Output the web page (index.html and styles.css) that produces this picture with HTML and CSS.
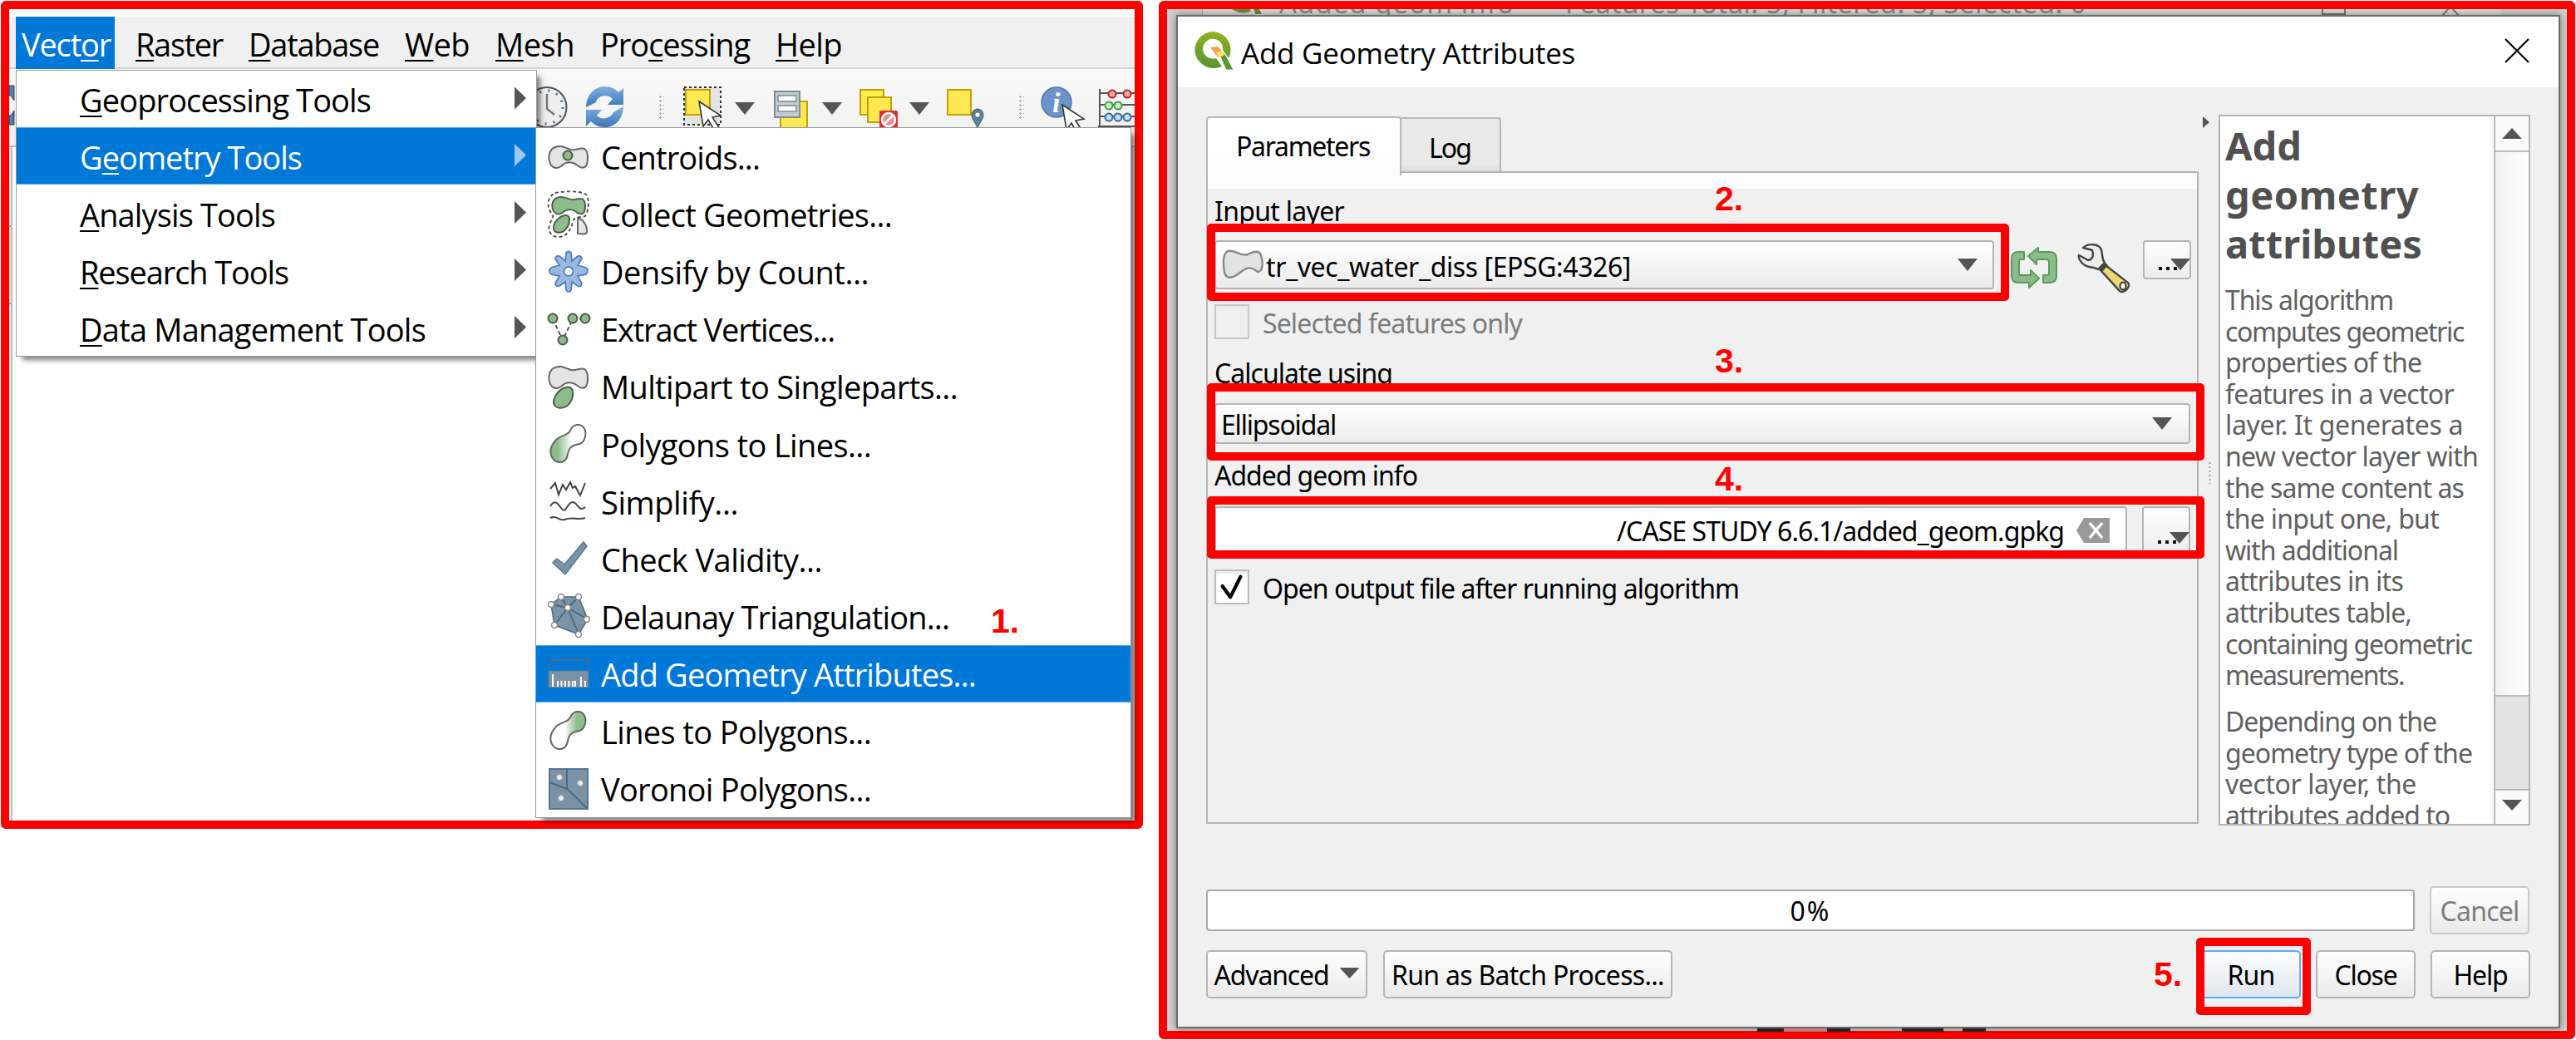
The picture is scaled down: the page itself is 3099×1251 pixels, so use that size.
FILE: index.html
```html
<!DOCTYPE html>
<html lang="en">
<head>
<meta charset="utf-8">
<title>Add Geometry Attributes</title>
<link rel="stylesheet" href="styles.css">
</head>
<body>
<svg class="defs" width="0" height="0">
  <defs>
    <linearGradient id="fadeR"><stop offset=".2" stop-color="#8cbc8c"/><stop offset=".6" stop-color="#fff"/></linearGradient>
    <linearGradient id="fadeL"><stop offset=".4" stop-color="#fff"/><stop offset=".75" stop-color="#8cbc8c"/></linearGradient>
    <linearGradient id="qg" x2="0" y2="1"><stop offset="0" stop-color="#93b023"/><stop offset="1" stop-color="#589632"/></linearGradient>
    <linearGradient id="blue" x2="0" y2="1"><stop offset="0" stop-color="#7fb0e0"/><stop offset="1" stop-color="#3a76b8"/></linearGradient>
    <path id="blob" d="M8 2C15-1 20 3 27 5C34 6 38 2 43 4C48 7 48 19 45 25C40 29 36 25 32 22C26 19 20 20 15 25C9 29 3 27 1 19C-1 11 2 4 8 2Z"/>
    <path id="bean" d="M34 2C41 1 46 8 44 16C42 24 39 25 33 26C24 28 24 34 22 41C18 50 8 48 4 41C0 33 4 25 10 19C16 14 23 15 26 9C28 5 29 3 34 2Z"/>
    <path id="cursor" d="M0 0L26 17L16 19L25 33L19 36L11 22L5 30Z" fill="#fff" stroke="#333" stroke-width="1.6"/>
    <symbol id="qlogo" viewBox="0 0 47 46"><path d="M23 0a23 22 0 1 0 10 42l-7-10a12 12 0 1 1 8-10l7 10A23 22 0 0 0 23 0Z" fill="url(#qg)"/><path d="M29 26l8 1 10 19H38Z" fill="#589632" stroke="#fff" stroke-width="1"/><path d="M19 19l9-1 8 9-8 4Z" fill="#f3a047"/><path d="M26 25l7-2 3 5-7 4Z" fill="#f4e36a"/></symbol>
  </defs>
</svg>

<main class="page">
  <section class="frame app">
    <nav class="menubar">
      <span class="mb mb-on"><span data-w="107">Vect<u>o</u>r</span></span>
      <span class="mb"><span data-w="105"><u>R</u>aster</span></span>
      <span class="mb"><span data-w="157"><u>D</u>atabase</span></span>
      <span class="mb"><span data-w="78"><u>W</u>eb</span></span>
      <span class="mb"><span data-w="95"><u>M</u>esh</span></span>
      <span class="mb"><span data-w="180">Pro<u>c</u>essing</span></span>
      <span class="mb"><span data-w="80"><u>H</u>elp</span></span>
    </nav>
    <div class="toolbar">
      <svg class="t-clock" viewBox="0 0 50 52"><ellipse cx="25" cy="26" rx="23.5" ry="24" fill="#eeeeec" stroke="#555" stroke-width="2"/><ellipse cx="25" cy="26" rx="19" ry="20" fill="none" stroke="#3a6ea5" stroke-width="3" stroke-dasharray="2 8.3"/><path d="M25 10v18l9 7" fill="none" stroke="#777" stroke-width="2.4"/></svg>
      <svg class="t-refresh" viewBox="0 0 48 52"><path d="M1 26C2 8 14 1 23 1C32 1 36 4 40 8L46 3V23H27L33 16C26 9 14 13 13 20L1 26Z" fill="url(#blue)"/><path d="M46 25C45 43 34 50 24 50C15 50 11 47 7 43L1 49V29H20L14 36C21 43 32 38 34 32Z" fill="url(#blue)"/></svg>
      <span class="grip g1"></span>
      <svg class="t-select" viewBox="0 0 50 52"><rect x="2" y="2" width="44" height="45" fill="#e4e4e4" stroke="#333" stroke-width="2" stroke-dasharray="3 3"/><rect x="4" y="5" width="29" height="30" fill="#fce94f" stroke="#c4a000" stroke-width="2"/><use href="#cursor" x="20" y="19"/></svg>
      <i class="down d1"></i>
      <svg class="t-form" viewBox="0 0 44 52"><rect x="9" y="19" width="32" height="32" fill="#fce94f" stroke="#c4a000" stroke-width="2"/><rect x="2" y="7" width="30" height="31" fill="#c3ccd3" stroke="#7d8b96" stroke-width="2"/><path d="M6 12h22v7H6zM6 24h22v7H6z" fill="#fff" stroke="#7d8b96" stroke-width="1.5"/></svg>
      <i class="down d2"></i>
      <svg class="t-desel" viewBox="0 0 48 52"><rect x="2" y="5" width="28" height="30" fill="#fce94f" stroke="#c4a000" stroke-width="2"/><rect x="11" y="14" width="28" height="30" fill="#fce94f" stroke="#c4a000" stroke-width="2"/><rect x="25" y="30" width="22" height="22" rx="2" fill="#d9313a"/><circle cx="36" cy="41" r="8" fill="#e88" stroke="#fff" stroke-width="2.5"/><path d="M30 47L42 35" stroke="#fff" stroke-width="3"/></svg>
      <i class="down d3"></i>
      <svg class="t-pin" viewBox="0 0 46 52"><rect x="2" y="5" width="28" height="30" fill="#fce94f" stroke="#c4a000" stroke-width="2"/><path d="M38 51C35 44 31 40 31 35A7 7 0 0 1 45 35C45 40 41 44 38 51Z" fill="#5d8096" stroke="#43606f"/><circle cx="38" cy="35" r="2.6" fill="#fff"/></svg>
      <span class="grip g2"></span>
      <svg class="t-info" viewBox="0 0 50 52"><circle cx="19" cy="20" r="18" fill="#6b95c8" stroke="#4a78b0" stroke-width="1.5"/><text x="14" y="32" class="info-i">i</text><use href="#cursor" x="26" y="23"/></svg>
      <svg class="t-abacus" viewBox="0 0 44 52"><path d="M2 4V50M0 49H44M2 9H44M2 23H44M2 37H44" stroke="#555" stroke-width="2" fill="none"/><g stroke-width="2"><g fill="#f5a9a9" stroke="#b22"><circle cx="17" cy="10" r="4.5"/><circle cx="35" cy="10" r="4.5"/></g><g fill="#bff0bf" stroke="#4a9a4a"><circle cx="13" cy="24" r="4.5"/><circle cx="24" cy="24" r="4.5"/></g><g fill="#bfe0f8" stroke="#37699c"><circle cx="13" cy="38" r="4.5"/><circle cx="24" cy="38" r="4.5"/><circle cx="35" cy="38" r="4.5"/></g></g></svg>
    </div>
    <div class="canvas">
      <div class="rail"><i class="rail-a"></i><i class="rail-b"></i></div>
      <div class="edge"></div>
    </div>
    <svg class="magnifier" viewBox="0 0 6 47"><path d="M0 0H6V18L2 12H0ZM0 47H6V30L2 36H0Z" fill="#4f7fb5" stroke="#345"/></svg>

    <ul class="dropdown">
      <li><span data-w="350"><u>G</u>eoprocessing Tools</span><i></i></li>
      <li class="on"><span data-w="267">G<u>e</u>ometry Tools</span><i></i></li>
      <li><span data-w="235"><u>A</u>nalysis Tools</span><i></i></li>
      <li><span data-w="251"><u>R</u>esearch Tools</span><i></i></li>
      <li><span data-w="416"><u>D</u>ata Management Tools</span><i></i></li>
    </ul>

    <ul class="submenu">
      <li><svg viewBox="0 0 48 50"><use href="#blob" y="11" fill="#e4e4e4" stroke="#666" stroke-width="2"/><circle cx="23" cy="23" r="5.5" fill="#8cbc8c" stroke="#4a5a4a" stroke-width="2"/></svg><span data-w="191">Centroids...</span></li>
      <li><svg viewBox="0 0 48 50"><path d="M8-1C18-3 38-4 45 1C50 8 48 20 44 27C36 29 32 27 29 33C28 42 22 52 12 52C2 52-1 44 1 38C3 30 8 28 3 23C-3 14-1 3 8-1Z" fill="none" stroke="#444" stroke-width="1.8" stroke-dasharray="4 3"/><use href="#blob" transform="translate(4 3) scale(.85 .8)" fill="#8cbc8c" stroke="#4a5a4a" stroke-width="2.2"/><path d="M20 26C27 25 26 36 21 42C16 49 6 48 6 41C6 35 12 27 20 26Z" fill="#8cbc8c" stroke="#4a5a4a" stroke-width="2"/><path d="M35 29C42 31 47 39 46 47C43 50 40 48 35 48Z" fill="#e4e4e4" stroke="#666" stroke-width="2"/></svg><span data-w="350">Collect Geometries...</span></li>
      <li><svg viewBox="0 0 48 50"><g fill="#9ab8e0" stroke="#4a7fc4" stroke-width="1.8"><path d="M20 12L21 2Q24-1 27 2L28 12L35 6Q39 5 40 9L35 17L45 20Q49 24 45 28L35 30L40 39Q39 44 35 42L28 37L27 47Q24 51 21 47L20 37L13 42Q8 43 8 39L13 30L3 28Q-1 24 3 20L13 17L8 9Q9 5 13 6Z"/><circle cx="24" cy="24.500" r="5.500" fill="#fff"/></g></svg><span data-w="322">Densify by Count...</span></li>
      <li><svg viewBox="0 0 48 50"><path d="M5 13L17 38L29 13H44" fill="none" stroke="#444" stroke-width="1.8" stroke-dasharray="5 3"/><g fill="#8cbc8c" stroke="#4a5a4a" stroke-width="2"><circle cx="5" cy="12" r="5.500"/><circle cx="29" cy="12" r="5.500"/><circle cx="44" cy="12" r="5.500"/><circle cx="17" cy="38" r="5.500"/></g></svg><span data-w="281">Extract Vertices...</span></li>
      <li><svg viewBox="0 0 48 50"><use href="#blob" y="0" fill="#e4e4e4" stroke="#666" stroke-width="2"/><path d="M21 26C30 24 31 34 27 42C23 52 8 54 6 45C6 37 12 28 21 26Z" fill="#8cbc8c" stroke="#4a5a4a" stroke-width="2"/></svg><span data-w="429">Multipart to Singleparts...</span></li>
      <li><svg viewBox="0 0 48 50"><use href="#bean" fill="url(#fadeR)" stroke="#666" stroke-width="2"/></svg><span data-w="325">Polygons to Lines...</span></li>
      <li><svg viewBox="0 0 48 50"><path d="M2 10L8 3L12 17L17 5L21 11L26 2L29 9L32 7L38 18L44 3M2 31C8 22 11 28 15 33C21 42 22 26 29 26C35 26 36 39 44 32M2 45C10 41 12 49 19 47C30 43 34 48 44 45" fill="none" stroke="#444" stroke-width="2"/></svg><span data-w="165">Simplify...</span></li>
      <li><svg viewBox="0 0 48 50"><path d="M5 30L10 25L19 32L42 5L46 10L20 44Z" fill="#7b93a6" stroke="#55788f" stroke-width="1.500"/></svg><span data-w="266">Check Validity...</span></li>
      <li><svg viewBox="0 0 48 50"><path d="M15 2H36L47 29L36 47L7 36L3 11Z" fill="#7b93a6" stroke="#4b6980" stroke-width="1.500"/><path d="M23 15L15 2M23 15L36 2M23 15L47 29M23 15L36 47M23 15L7 36M23 15L3 11" stroke="#4b6980" stroke-width="1.800"/><g fill="#fff" stroke="#888" stroke-width="1.500"><circle cx="15" cy="2" r="3.500"/><circle cx="36" cy="2" r="3.500"/><circle cx="46" cy="29" r="3.500"/><circle cx="36" cy="47" r="3.500"/><circle cx="7" cy="36" r="3.500"/><circle cx="3" cy="11" r="3.500"/><circle cx="23" cy="15" r="3.500"/></g></svg><span data-w="419">Delaunay Triangulation...</span></li>
      <li class="on"><svg viewBox="0 0 48 50"><path d="M1 17V9H47V17" fill="none" stroke="#466a8c" stroke-width="2"/><rect x="0" y="22" width="48" height="20" fill="#7b93a6" stroke="#5a7890"/><path d="M5 26V41M11 34V41M15.500 34V41M20 34V41M24.500 34V41M29 34V41M32 34V41M39 29V41M44 34V41" stroke="#fff" stroke-width="2"/></svg><span data-w="451">Add Geometry Attributes...</span></li>
      <li><svg viewBox="0 0 48 50"><use href="#bean" fill="url(#fadeL)" stroke="#666" stroke-width="2"/></svg><span data-w="325">Lines to Polygons...</span></li>
      <li><svg viewBox="0 0 48 50"><rect x="1" y="1" width="46" height="48" fill="#7b93a6" stroke="#55788f" stroke-width="2"/><path d="M22 1V24M1 17L22 25C32 33 38 41 47 49" fill="none" stroke="#4b6980" stroke-width="2"/><g fill="#eee" stroke="#999"><circle cx="13" cy="11" r="3.500"/><circle cx="38" cy="18" r="3.500"/><circle cx="15" cy="36" r="3.500"/></g></svg><span data-w="325">Voronoi Polygons...</span></li>
    </ul>
  </section>

  <section class="frame desk">
    <div class="behind">
      <svg class="behind-q"><use href="#qlogo"/></svg>
      <span data-w="283">Added geom info</span><span class="behind-dash">—</span><span data-w="627">Features Total: 5, Filtered: 5, Selected: 0</span>
      <i class="behind-max"></i><svg class="behind-x" viewBox="0 0 30 30"><path d="M1 29L15 14L29 29" fill="none" stroke="#777" stroke-width="2"/></svg>
    </div>
    <div class="dialog">
      <header class="titlebar">
        <svg class="logo"><use href="#qlogo"/></svg>
        <span class="title" data-w="402">Add Geometry Attributes</span>
        <svg class="close" viewBox="0 0 30 30"><path d="M1 1L29 29M29 1L1 29" stroke="#111" stroke-width="2.4"/></svg>
      </header>
      <div class="body">
        <div class="left">
          <div class="tabs">
            <div class="tab active"><span data-w="161">Parameters</span></div>
            <div class="tab"><span data-w="50">Log</span></div>
          </div>
          <div class="panel">
            <div class="label l1"><span data-w="156">Input layer</span></div>
            <div class="row r1">
              <div class="combo"><svg class="poly" viewBox="0 0 48 34"><path d="M6 1C16-1 20 8 30 5C38 1 44 0 46 6C49 16 48 26 42 26C32 18 28 22 22 26C12 34 4 36 2 26C0 14 1 4 6 1Z" fill="#e2e2e2" stroke="#888a85" stroke-width="2.400"/></svg><span data-w="439">tr_vec_water_diss [EPSG:4326]</span><i class="down"></i></div>
              <svg class="cycle" viewBox="0 0 56 50"><g fill="#8cbc8c" stroke="#5a9a5a" stroke-width="2" stroke-linejoin="round"><path d="M16 6H9Q1 6 1 14V35Q1 43 9 43H22V49L34 38L24 28V34H12Q10 34 10 32V17Q10 15 12 15H16Z"/><path d="M39 43H46Q55 43 55 35V14Q55 6 46 6H33V1L21 11L31 21V15H43Q46 15 46 18V32Q46 34 44 34H39Z"/></g></svg>
              <svg class="wrench" viewBox="0 0 62 59"><path d="M6 5C12-1 26 0 28 8C30 14 28 18 32 23L24 31C18 27 14 30 8 26C3 23 0 17 1 14L12 20C18 19 19 13 17 8Z" fill="#eeeeec" stroke="#444" stroke-width="2.400" stroke-linejoin="round"/><path d="M33 26L60 47C64 52 55 61 50 57L27 32Z" fill="#edd773" stroke="#444" stroke-width="2.400"/><path d="M32 22L25 31L29 34L36 26Z" fill="#444"/><ellipse cx="54" cy="51" rx="3.500" ry="4.500" fill="#fff" stroke="#333" stroke-width="2"/></svg>
              <button class="dots b1"><b></b><b></b><b></b><i class="down"></i></button>
            </div>
            <div class="check c1"><i class="box off"></i><span data-w="312">Selected features only</span></div>
            <div class="label l2"><span data-w="214">Calculate using</span></div>
            <div class="row r2"><div class="combo"><span data-w="138">Ellipsoidal</span><i class="down"></i></div></div>
            <div class="label l3"><span data-w="244">Added geom info</span></div>
            <div class="row r3">
              <div class="field"><span data-w="538">/CASE STUDY 6.6.1/added_geom.gpkg</span><svg class="clear" viewBox="0 0 40 30"><path d="M0 15L9 0H40V30H9Z" fill="#999"/><path d="M16 6L31 24M31 6L16 24" stroke="#fff" stroke-width="3.500"/></svg></div>
              <button class="dots b2"><b></b><b></b><b></b><i class="down"></i></button>
            </div>
            <div class="check c2"><i class="box"><svg viewBox="0 0 40 40"><path d="M8 19L18 33L31 7" fill="none" stroke="#000" stroke-width="4.500" stroke-linecap="round" stroke-linejoin="round"/></svg></i><span data-w="573">Open output file after running algorithm</span></div>
          </div>
        </div>
        <div class="splitter"><i class="collapse"></i><i class="handle"></i></div>
        <aside class="help">
          <div class="help-text">
            <h1><span data-w="92">Add</span><br><span data-w="233">geometry</span><br><span data-w="237">attributes</span></h1>
            <p><span data-w="202">This algorithm</span><br><span data-w="287">computes geometric</span><br><span data-w="236">properties of the</span><br><span data-w="275">features in a vector</span><br><span data-w="286">layer. It generates a</span><br><span data-w="304">new vector layer with</span><br><span data-w="287">the same content as</span><br><span data-w="257">the input one, but</span><br><span data-w="208">with additional</span><br><span data-w="214">attributes in its</span><br><span data-w="224">attributes table,</span><br><span data-w="297">containing geometric</span><br><span data-w="215">measurements.</span></p>
            <p><span data-w="254">Depending on the</span><br><span data-w="297">geometry type of the</span><br><span data-w="230">vector layer, the</span><br><span data-w="270">attributes added to</span></p>
          </div>
          <div class="scroll"><div class="s-up"><i></i></div><div class="s-thumb"></div><div class="s-groove"></div><div class="s-down"><i class="down"></i></div></div>
        </aside>
      </div>
      <div class="progress-row">
        <div class="progress"><span data-w="49">0%</span></div>
        <button class="btn w120 disabled"><span data-w="95">Cancel</span></button>
      </div>
      <div class="buttons">
        <button class="btn adv"><span data-w="138">Advanced</span><i class="down"></i></button>
        <button class="btn batch"><span data-w="328">Run as Batch Process...</span></button>
        <span class="push"></span>
        <button class="btn w120 run"><span data-w="57">Run</span></button>
        <button class="btn w120"><span data-w="75">Close</span></button>
        <button class="btn w120"><span data-w="65">Help</span></button>
      </div>
    </div>
    <div class="under"><i class="u1"></i><i class="u2"></i><i class="u3"></i></div>
  </section>

  <!-- step callouts laid over both windows -->
  <b class="num n1">1.</b>
  <b class="num n2">2.</b><i class="mark m2"></i>
  <b class="num n3">3.</b><i class="mark m3"></i>
  <b class="num n4">4.</b><i class="mark m4"></i>
  <b class="num n5">5.</b><i class="mark m5"></i>
</main>
<script src="fit.js"></script>
</body>
</html>
```
FILE: fit.js
```js
// Tracks each label so that it takes the width given in data-w.
document.querySelectorAll('[data-w]').forEach(function (el) {
  var natural = el.getBoundingClientRect().width;
  var count = el.textContent.length;
  el.style.letterSpacing = ((Number(el.dataset.w) - natural) / count).toFixed(3) + 'px';
});
```
FILE: styles.css
```css
* { box-sizing: border-box; }
body { margin: 0; background: #fff; font-family: "Noto Sans", "Open Sans", sans-serif; color: #000; }
.defs { position: absolute; }
ul, h1, p { margin: 0; padding: 0; list-style: none; }
button { font: inherit; color: inherit; margin: 0; padding: 0; }
svg { display: block; flex: none; overflow: visible; }
span { white-space: pre; }
u { text-decoration-thickness: 2px; text-underline-offset: 4px; text-decoration-skip-ink: none; }
.page { position: relative; display: flex; align-items: flex-start; gap: 19px; width: 3099px; height: 1251px; padding: 1px 0 0 1px; overflow: hidden; }
.frame { position: relative; display: flex; flex-direction: column; border: 10px solid #f00; border-radius: 6px; flex: none; }

/* main window */
.app { width: 1374px; height: 996px; padding-top: 9px; font-family: "Open Sans", "Noto Sans", sans-serif; font-size: 38px; }
.menubar { display: flex; height: 63px; padding-left: 8px; background: #f0f0f0; border-bottom: 2px solid #d4d4d4; line-height: 66px; }
.mb { padding: 0 12px; margin-right: 7px; }
.mb-on { width: 119px; height: 63px; padding: 0 0 0 7px; margin-right: 13px; background: #0078d7; color: #fff; }
.toolbar { display: flex; height: 94px; padding: 20px 0 0 622px; background: linear-gradient(#fafafa, #efefef); border-bottom: 2px solid #bbb; overflow: hidden; }
.toolbar svg { height: 52px; }
.t-clock { width: 50px; }
.t-refresh { width: 48px; margin-left: 21px; }
.grip { width: 7px; height: 30px; margin-top: 11px; background: radial-gradient(circle, #aaa 1px, transparent 1.4px) 0 0 / 5px 5px; flex: none; }
.g1 { margin-left: 40px; }
.t-select { width: 50px; margin-left: 22px; }
.down { width: 24px; height: 15px; background: #555; clip-path: polygon(0 0, 100% 0, 50% 100%); flex: none; }
.toolbar .down { margin-top: 20px; }
.d1 { margin-left: 13px; }
.t-form { width: 44px; margin-left: 22px; }
.d2 { margin-left: 15px; }
.t-desel { width: 48px; margin-left: 20px; }
.d3 { margin-left: 13px; }
.t-pin { width: 46px; margin-left: 20px; }
.g2 { margin-left: 41px; }
.t-info { width: 50px; margin-left: 20px; }
.info-i { font: italic bold 34px "Liberation Serif", serif; fill: #fff; }
.t-abacus { width: 44px; margin-left: 19px; }
.canvas { display: flex; justify-content: space-between; flex: 1; background: #fff; }
.rail { width: 4px; border-right: 2px solid #bbb; display: flex; flex-direction: column; background: #f5f5f5; }
.rail-a { height: 96px; background: #f2f2f2; border-bottom: 2px solid #aaa; }
.rail-b { height: 93px; background: #d5efd0; border-bottom: 2px solid #9a9; }
.edge { width: 5px; background: #ddd; }
.magnifier { position: absolute; left: 0; top: 92px; width: 6px; height: 47px; }
.dropdown, .submenu { position: absolute; background: #fff; border: 1px solid #999; box-shadow: 6px 6px 6px -2px rgba(0,0,0,.5); }
.dropdown { left: 8px; top: 73px; width: 627px; height: 345px; }
.dropdown li { display: flex; align-items: center; justify-content: space-between; height: 69px; padding: 2px 12px 0 76px; }
.dropdown li:first-child { height: 68px; }
.dropdown i { width: 14px; height: 27px; margin-top: -4px; background: #555; clip-path: polygon(0 0, 100% 50%, 0 100%); }
.dropdown .on i { background: #9dc9f0; }
.on { background: #0078d7; color: #fff; box-shadow: inset 0 1px #4aa8f5, inset 0 -1px #4aa8f5; }
.submenu { left: 633px; top: 142px; width: 717px; height: 831px; }
.submenu li { display: flex; align-items: center; gap: 15px; height: 69.1px; padding-left: 15px; }
.submenu li span { margin-top: 1px; }
.submenu svg { width: 48px; height: 50px; }

/* dialog */
.desk { width: 1704px; height: 1249px; background: #d0d0d0; font-size: 32px; }
.behind { display: flex; align-items: flex-end; height: 7px; overflow: hidden; margin: 0 79px 0 42px; padding-left: 26px; background: #dcdcdc; border-left: 1px solid #aaa; color: #888; line-height: 40px; font-size: 33px; flex: none; }
.behind-q { width: 46px; height: 46px; margin-right: 20px; }
.behind > span { margin-bottom: -6px; }
.behind-dash { margin: 0 14px; }
.behind-max { width: 29px; height: 29px; margin-left: 283px; border: 2px solid #777; }
.behind-x { width: 30px; height: 30px; margin-left: 111px; margin-bottom: -6px; }
.dialog { display: flex; flex-direction: column; width: 1665px; height: 1219px; margin-left: 11px; border: 2px solid #6c6c6c; background: #f0f0f0; box-shadow: 0 0 9px rgba(0,0,0,.45); flex: none; }
.titlebar { display: flex; align-items: center; height: 85px; padding-left: 20px; background: #fff; font-family: "Open Sans", "Noto Sans", sans-serif; font-size: 35px; }
.logo { width: 47px; height: 46px; margin-top: -4px; }
.title { margin: 1px 0 0 9px; }
.close { width: 30px; height: 30px; margin: -3px 35px 0 auto; }
.body { display: flex; height: 855px; margin: 33px 0 0 34px; }
.left { width: 1194px; height: 853px; display: flex; flex-direction: column; }
.tabs { display: flex; height: 70px; align-items: flex-end; }
.tab { width: 120px; height: 67px; padding: 9px 0 0 33px; border: 2px solid #b8b8b8; border-left: 0; border-bottom-color: #ddd; border-radius: 0 4px 0 0; background: linear-gradient(#e9e9e9 85%, #dedede); line-height: 52px; }
.tab.active { width: 235px; height: 71px; padding: 8px 0 0 34px; border-left: 2px solid #b8b8b8; border-bottom: 0; border-radius: 4px 4px 0 0; background: linear-gradient(#fff, #fcfcfc); z-index: 1; margin-bottom: -3px; }
.panel { flex: 1; display: flex; flex-direction: column; border: 2px solid #b4b4b4; margin-top: -2px; padding: 19px 8px 0; background: linear-gradient(#fcfcfc 19px, #f0f0f0 19px); }
.label span { display: inline-block; }
.l1 { height: 51px; line-height: 53px; margin-bottom: 11px; }
.row { display: flex; flex: none; }
.r1 { height: 59px; }
.combo { display: flex; align-items: center; flex: none; height: 100%; border: 2px solid #b5b5b5; border-radius: 4px; background: linear-gradient(#fff, #ececec); }
.combo .down { margin-left: auto; }
.r1 .combo { width: 938px; padding: 0 18px 0 8px; }
.poly { width: 48px; height: 34px; margin-top: -2px; }
.poly + span { margin: 4px 0 0 4px; }
.cycle { width: 56px; height: 50px; margin: 8px 0 0 20px; }
.wrench { width: 62px; height: 59px; margin: 4px 0 0 25px; }
.dots { display: flex; align-items: flex-end; width: 58px; height: 47px; padding: 0 2px 9px 17px; border: 2px solid #b5b5b5; border-radius: 4px; background: linear-gradient(#fff, #ececec); gap: 5px; flex: none; }
.dots b { width: 4px; height: 4px; background: #111; flex: none; }
.dots .down { margin-left: -13px; height: 14px; }
.b1 { margin-left: 16px; }
.check { display: flex; align-items: center; height: 42px; gap: 16px; flex: none; }
.check span { margin-top: 2px; }
.c1 { margin-top: 18px; color: #7c7c7c; }
.box { width: 42px; height: 42px; border: 2px solid #bdbdbd; background: #fff; box-shadow: inset 0 3px 3px #e8e8e8; }
.off { background: #f0f0f0; border-color: #c8c8c8; }
.l2 { height: 40px; line-height: 42px; margin: 20px 0 17px; }
.r2 { height: 49px; }
.r2 .combo { width: 1174px; padding: 0 20px 0 6px; }
.r2 .combo span { margin-top: 2px; }
.l3 { height: 41px; line-height: 42px; margin: 17px 0; }
.r3 { height: 58px; }
.field { display: flex; align-items: center; justify-content: flex-end; width: 1098px; padding-right: 19px; border: 2px solid #b5b5b5; border-radius: 4px; background: #fff; }
.clear { width: 40px; height: 30px; margin-left: 15px; }
.b2 { height: 58px; margin-left: 18px; padding-bottom: 11px; }
.c2 { margin-top: 18px; }
.splitter { width: 24px; padding: 2px 0 0 5px; }
.splitter i { display: block; }
.collapse { width: 8px; height: 14px; background: #555; clip-path: polygon(0 0, 100% 50%, 0 100%); }
.handle { width: 3px; height: 26px; margin: 402px 0 0 7px; background: repeating-linear-gradient(#bbb 0 2px, transparent 2px 5px); }
.help { display: flex; width: 375px; height: 855px; border: 2px solid #b4b4b4; background: #fff; color: #606060; overflow: hidden; }
.help-text { width: 329px; padding: 6px 0 0 6px; overflow: hidden; }
.help h1 { font-size: 47px; line-height: 59px; color: #505050; height: 196px; }
.help p { height: 489px; margin-bottom: 18px; line-height: 37.6px; }
.scroll { display: flex; flex-direction: column; width: 42px; border-left: 2px solid #b8b8b8; }
.s-up, .s-down { display: flex; justify-content: center; height: 41px; background: #fafafa; }
.s-up i { width: 24px; height: 13px; margin-top: 14px; background: #555; clip-path: polygon(50% 0, 100% 100%, 0 100%); }
.s-thumb { height: 657px; border: solid #bbb; border-width: 2px 0; background: linear-gradient(90deg, #f2f2f2, #fff); }
.s-groove { height: 111px; background: #e3e3e3; }
.s-down { border-top: 2px solid #bbb; }
.s-down .down { height: 13px; margin-top: 11px; }
.progress-row { display: flex; align-items: center; gap: 18px; height: 58px; margin: 73px 34px 0; }
.progress { display: flex; align-items: center; justify-content: center; width: 1454px; height: 50px; border: 2px solid #a8a8a8; border-radius: 4px; background: #fff; }
.progress span, .btn span { margin-top: 1px; }
.btn { display: flex; align-items: center; justify-content: center; height: 58px; border: 2px solid #b5b5b5; border-radius: 5px; background: linear-gradient(#fff, #eaeaea); flex: none; }
.w120 { width: 120px; }
.disabled { color: #7c7c7c; border-color: #cacaca; }
.buttons { display: flex; height: 58px; margin: 19px 34px 0; gap: 18px; }
.adv { width: 194px; gap: 13px; }
.adv .down { height: 13px; margin-top: -3px; }
.batch { width: 348px; margin-left: 1px; }
.push { flex: 1; }
.run { border-color: #5cb0f5; background: linear-gradient(#fdfeff, #dfe6ed); }
.under { display: flex; height: 4px; }
.under i { height: 4px; background: #222; }
.u1 { width: 32px; margin-left: 710px; }
.under .u2 { width: 52px; background: #c07a80; }
.u3 { width: 28px; box-shadow: 90px 0 #222, 112px 0 #222, 163px 0 #222; }

/* callouts */
.num { position: absolute; font: bold 41px/30px "Liberation Sans", Arial, sans-serif; color: #f00; }
.mark { position: absolute; border: 10px solid #f00; border-radius: 5px; }
.n1 { left: 1192px; top: 732px; }
.n2 { left: 2063px; top: 224px; }
.n3 { left: 2063px; top: 419px; }
.n4 { left: 2063px; top: 561px; }
.n5 { left: 2591px; top: 1157px; }
.m2 { left: 1452px; top: 269px; width: 965px; height: 93px; }
.m3 { left: 1452px; top: 461px; width: 1200px; height: 93px; }
.m4 { left: 1452px; top: 597px; width: 1200px; height: 75px; }
.m5 { left: 2642px; top: 1128px; width: 138px; height: 93px; }
```
